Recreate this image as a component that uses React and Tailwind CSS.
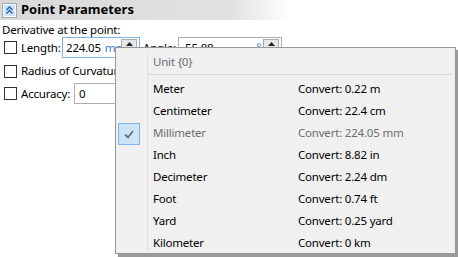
import React from "react";

const font = { fontFamily: '"Noto Sans", "Segoe UI", sans-serif' };

function Check() {
  return <div className="w-[13px] h-[13px] border border-[#333] bg-white shrink-0" />;
}

function Spin({ className = "" }) {
  return (
    <div className={"w-[16px] h-[10px] bg-[#e6e6e6] border border-[#acacac] flex items-center justify-center " + className}>
      <svg width="7" height="4" viewBox="0 0 7 4"><path d="M0 4 L3.5 0 L7 4 Z" fill="#222" /></svg>
    </div>
  );
}

const rows = [
  ["Meter", "Convert: 0.22 m"],
  ["Centimeter", "Convert: 22.4 cm"],
  ["Millimeter", "Convert: 224.05 mm", true],
  ["Inch", "Convert: 8.82 in"],
  ["Decimeter", "Convert: 2.24 dm"],
  ["Foot", "Convert: 0.74 ft"],
  ["Yard", "Convert: 0.25 yard"],
  ["Kilometer", "Convert: 0 km"],
];

export default function App() {
  return (
    <div className="relative w-[458px] h-[257px] bg-white overflow-hidden text-[11.5px] tracking-[-0.2px] text-black" style={font}>
      <div className="h-[20px] w-[290px] flex items-center gap-[5px] pl-[3px] bg-gradient-to-r from-[#d8d8d8] via-[#e2e2e2] via-80% to-white">
        <div className="w-[13px] h-[13px] bg-[#cfe3f7] border border-white outline outline-[#9ab] flex items-center justify-center">
          <svg width="9" height="9" viewBox="0 0 9 9" fill="none" stroke="#1e5fb4" strokeWidth="1.4">
            <path d="M1.5 4 L4.5 1 L7.5 4" />
            <path d="M1.5 7.5 L4.5 4.5 L7.5 7.5" />
          </svg>
        </div>
        <span className="font-bold text-[13px] tracking-normal">Point Parameters</span>
      </div>
      <div className="pl-[2px] mt-[2px] leading-[16px]">Derivative at the point:</div>
      <div className="flex items-center h-[21px] mt-[-1px] pl-[4px]">
        <Check />
        <span className="ml-[4px] w-[41px]">Length:</span>
        <div className="relative w-[78px] h-[21px] border border-[#7eb4ea] bg-white flex items-center pl-[3px]">
          224.05 <span className="text-[#3c7fd0] ml-[4px]">mm</span>
          <Spin className="absolute right-[2px] top-[1px]" />
        </div>
        <span className="ml-[3px] w-[35px]">Angle:</span>
        <div className="relative w-[104px] h-[21px] border border-[#abadb3] bg-white flex items-center pl-[6px]">
          55.88
          <span className="absolute right-[20px] text-[#3c7fd0] top-[0px]">°</span>
          <Spin className="absolute right-[2px] top-[1px]" />
        </div>
      </div>
      <div className="flex items-center h-[22px] mt-[2px] pl-[4px]">
        <Check />
        <span className="ml-[4px]">Radius of Curvature</span>
      </div>
      <div className="flex items-center h-[21px] mt-[1px] pl-[4px]">
        <Check />
        <span className="ml-[4px] w-[53px]">Accuracy:</span>
        <div className="w-[60px] h-[21px] border border-[#abadb3] bg-white flex items-center pl-[4px]">0</div>
      </div>

      <div className="absolute left-[115px] top-[47px] w-[341px] h-[207px] bg-[#f0f0f0] border border-[#979797] shadow-[3px_3px_1px_#9a9a9a]">
        <div className="relative h-full pt-[2px]">
          <div className="absolute left-[31px] top-[2px] bottom-[2px] w-[1px] bg-[#e2e2e2]" />
          <div className="h-[24px] flex items-center pl-[37px] text-[#6d6d6d]">Unit {"{0}"}</div>
          <div className="ml-[32px] mr-[3px] h-[1px] bg-[#d7d7d7] mb-[3px]" />
          {rows.map(([a, b, sel]) => (
            <div key={a} className={"relative h-[22px] flex items-center " + (sel ? "text-[#6d6d6d]" : "")}>
              {sel && (
                <div className="absolute left-[2px] top-[1px] w-[22px] h-[22px] bg-[#cce4f7] border border-[#7eb4ea] flex items-center justify-center">
                  <svg width="10" height="9" viewBox="0 0 10 9" fill="none" stroke="#6d6d6d" strokeWidth="1.8">
                    <path d="M1 4.5 L4 7.5 L9 1" />
                  </svg>
                </div>
              )}
              <span className="pl-[37px] w-[182px]">{a}</span>
              <span>{b}</span>
            </div>
          ))}
        </div>
      </div>
    </div>
  );
}
